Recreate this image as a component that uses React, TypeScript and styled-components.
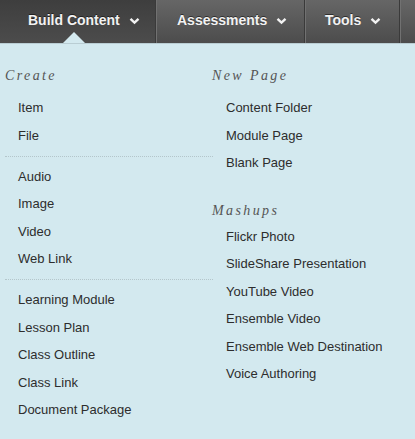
import React from "react";
import styled, { createGlobalStyle } from "styled-components";

const Global = createGlobalStyle`
  html, body { margin: 0; padding: 0; background: #d3e9ef; }
  body { font-family: "Liberation Sans", Arial, sans-serif; }
`;

const Page = styled.div`
  width: 415px;
  height: 439px;
  overflow: hidden;
  background: #d3e9ef;
`;

const NavBar = styled.nav`
  display: flex;
  height: 43px;
  background: linear-gradient(#666666, #4c4c4c);
  border-bottom: 1px solid #b9cdd3;
`;

const Tab = styled.div<{ $w: number; $pl: number; $active?: boolean }>`
  position: relative;
  display: flex;
  align-items: center;
  gap: 9px;
  width: ${(p) => p.$w}px;
  padding-left: ${(p) => p.$pl}px;
  box-sizing: border-box;
  background: ${(p) => (p.$active ? "linear-gradient(#3e3e3e, #4c4c4c)" : "transparent")};
  border-right: 1px solid #3a3a3a;
  box-shadow: 1px 0 0 #717171;
  color: #f2f2f2;
  font-weight: bold;
  font-size: 14px;
  text-shadow: 0 -1px 0 rgba(0, 0, 0, 0.5);
  padding-bottom: 3px;
`;

const Pointer = styled.span`
  position: absolute;
  left: 63px;
  bottom: 0;
  width: 0;
  height: 0;
  border-left: 11px solid transparent;
  border-right: 11px solid transparent;
  border-bottom: 11px solid #d3e9ef;
`;

const Chevron = () => (
  <svg width="11" height="8" viewBox="0 0 11 8" style={{ marginTop: 2 }}>
    <path d="M1.5 1.8 L5.5 5.6 L9.5 1.8" fill="none" stroke="#f2f2f2" strokeWidth="2.4" />
  </svg>
);

const Panel = styled.div`
  display: flex;
  padding-top: 22px;
`;

const Column = styled.div<{ $w: number; $pl: number }>`
  width: ${(p) => p.$w}px;
  padding-left: ${(p) => p.$pl}px;
  box-sizing: border-box;
  display: flex;
  flex-direction: column;
`;

const Heading = styled.div<{ $mb: number; $mt?: number }>`
  font-family: "Liberation Serif", "Times New Roman", serif;
  font-style: italic;
  font-size: 14px;
  letter-spacing: 2.4px;
  color: #555;
  height: 20px;
  line-height: 20px;
  margin-top: ${(p) => p.$mt ?? 0}px;
  margin-bottom: ${(p) => p.$mb}px;
`;

const Item = styled.div<{ $indent?: number }>`
  height: 27.5px;
  line-height: 27.5px;
  padding-left: ${(p) => p.$indent ?? 13}px;
  font-size: 13px;
  color: #2d2d2d;
`;

const Divider = styled.div`
  width: 208px;
  height: 0;
  border-top: 1px dotted #b4c6cb;
  margin: 6.5px 0 6px;
`;

const groups = [
  ["Item", "File"],
  ["Audio", "Image", "Video", "Web Link"],
  ["Learning Module", "Lesson Plan", "Class Outline", "Class Link", "Document Package"],
];

const newPage = ["Content Folder", "Module Page", "Blank Page"];
const mashups = [
  "Flickr Photo",
  "SlideShare Presentation",
  "YouTube Video",
  "Ensemble Video",
  "Ensemble Web Destination",
  "Voice Authoring",
];

export default function App() {
  return (
    <Page>
      <Global />
      <NavBar>
        <Tab $w={156} $pl={28} $active>
          Build Content <Chevron />
          <Pointer />
        </Tab>
        <Tab $w={149} $pl={21}>
          Assessments <Chevron />
        </Tab>
        <Tab $w={95} $pl={20}>
          Tools <Chevron />
        </Tab>
      </NavBar>
      <Panel>
        <Column $w={207} $pl={5}>
          <Heading $mb={8}>Create</Heading>
          {groups.map((g, i) => (
            <React.Fragment key={i}>
              {i > 0 && <Divider />}
              {g.map((t) => (
                <Item key={t}>{t}</Item>
              ))}
            </React.Fragment>
          ))}
        </Column>
        <Column $w={208} $pl={5}>
          <Heading $mb={8}>New Page</Heading>
          {newPage.map((t) => (
            <Item key={t} $indent={14}>{t}</Item>
          ))}
          <Heading $mt={24} $mb={2}>Mashups</Heading>
          {mashups.map((t) => (
            <Item key={t} $indent={14}>{t}</Item>
          ))}
        </Column>
      </Panel>
    </Page>
  );
}
